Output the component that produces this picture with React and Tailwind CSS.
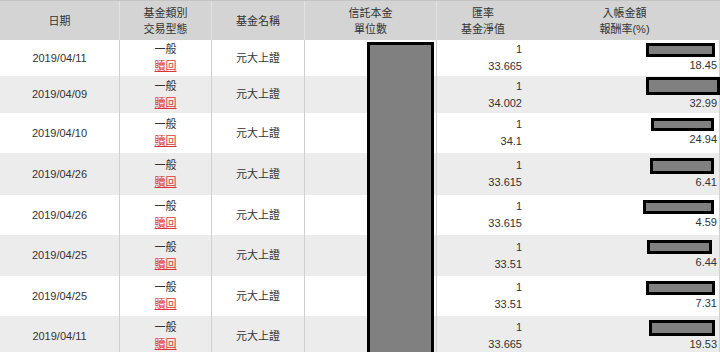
import React from 'react';

const FONT = "font-['Liberation_Sans','Noto_Sans_CJK_TC',sans-serif]";

const rows = [
  { date: '2019/04/11', nav: '33.665', rate: '18.45', h: 'h-[36px]', box: 'w-[69px] h-[14px] mr-[2px]' },
  { date: '2019/04/09', nav: '34.002', rate: '32.99', h: 'h-[37px]', box: 'w-[74px] h-[18px] -mr-[3px]' },
  { date: '2019/04/10', nav: '34.1', rate: '24.94', h: 'h-[40px]', box: 'w-[63px] h-[13px] mr-[3px]' },
  { date: '2019/04/26', nav: '33.615', rate: '6.41', h: 'h-[42px]', box: 'w-[64px] h-[16px] mr-[3px]' },
  { date: '2019/04/26', nav: '33.615', rate: '4.59', h: 'h-[40px]', box: 'w-[71px] h-[14px] mr-[3px]' },
  { date: '2019/04/25', nav: '33.51', rate: '6.44', h: 'h-[41px]', box: 'w-[65px] h-[14px] mr-[5px]' },
  { date: '2019/04/25', nav: '33.51', rate: '7.31', h: 'h-[40px]', box: 'w-[69px] h-[14px] mr-[2px]' },
  { date: '2019/04/11', nav: '33.665', rate: '19.53', h: 'h-[40px]', box: 'w-[66px] h-[16px] mr-[2px]' },
];

const Redact = ({ className }) => (
  <div className={`bg-[#808080] border-[3px] border-black ${className}`} />
);

export default function App() {
  return (
    <div className={`relative w-[720px] h-[352px] overflow-hidden bg-white text-[11px] leading-[16px] text-[#333] ${FONT}`}>
      {/* header */}
      <div className="flex h-[40px] bg-[#d4d4d4] border-t border-[#c4c4c4]">
        <div className="w-[120px] flex items-center justify-center border-r border-[#e2e2e2]">日期</div>
        <div className="w-[92px] flex flex-col items-center justify-center border-r border-[#e2e2e2]">
          <span>基金類別</span>
          <span>交易型態</span>
        </div>
        <div className="w-[93px] flex items-center justify-center border-r border-[#e2e2e2]">基金名稱</div>
        <div className="w-[132px] flex flex-col items-center justify-center border-r border-[#e2e2e2]">
          <span>信託本金</span>
          <span>單位數</span>
        </div>
        <div className="w-[92px] flex flex-col items-center justify-center">
          <span>匯率</span>
          <span>基金淨值</span>
        </div>
        <div className="flex-1 flex flex-col items-center justify-center">
          <span>入帳金額</span>
          <span>報酬率(%)</span>
        </div>
      </div>

      {/* body */}
      {rows.map((r, i) => (
        <div key={i} className={`flex leading-[17px] ${r.h} ${i % 2 ? 'bg-[#ececec]' : 'bg-white'}`}>
          <div className="w-[120px] flex items-center justify-center border-r border-[#d0d0d0]">{r.date}</div>
          <div className="w-[92px] flex flex-col items-center justify-center border-r border-[#d0d0d0]">
            <span>一般</span>
            <span className="text-[#dc3338] underline">贖回</span>
          </div>
          <div className="w-[93px] flex items-center justify-center border-r border-[#d0d0d0]">元大上證</div>
          <div className="w-[132px] border-r border-[#d0d0d0]" />
          <div className="w-[92px] flex flex-col items-end justify-center pr-[7px]">
            <span>1</span>
            <span>{r.nav}</span>
          </div>
          <div className="flex-1 flex flex-col items-end justify-center pr-[2px] border-r border-[#d0d0d0]">
            <Redact className={r.box} />
            <span>{r.rate}</span>
          </div>
        </div>
      ))}

      {/* unit-count column redaction */}
      <Redact className="absolute left-[367px] top-[42px] w-[67px] h-[330px]" />
    </div>
  );
}
